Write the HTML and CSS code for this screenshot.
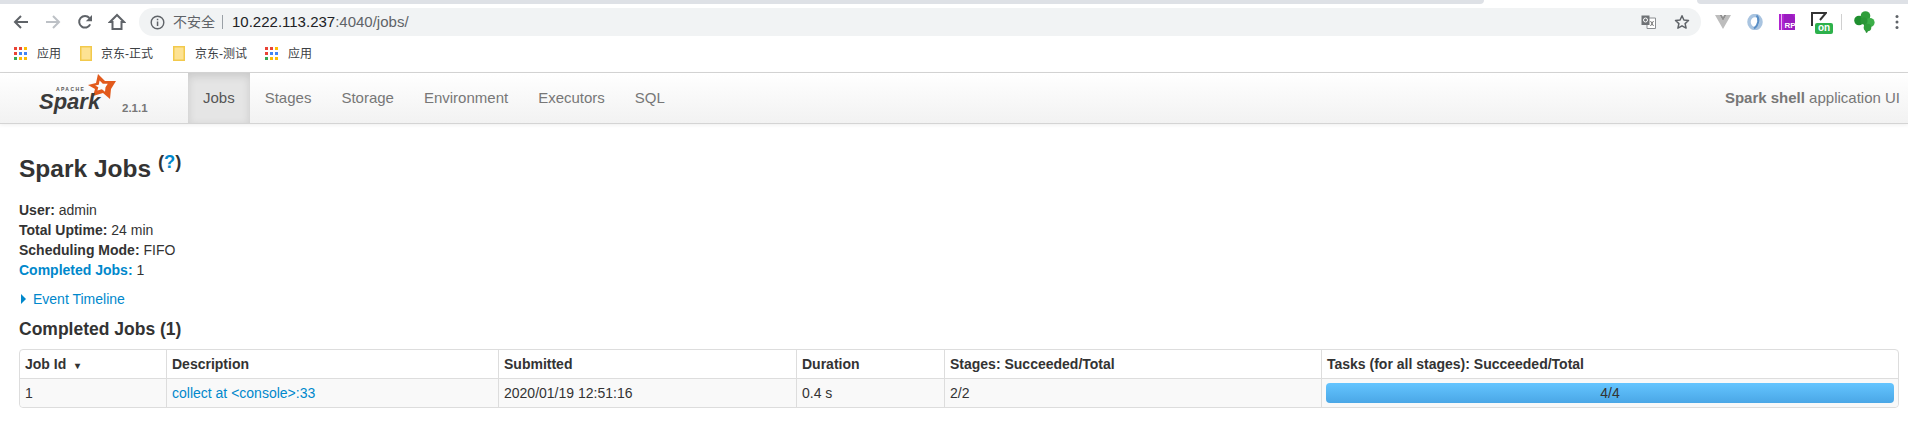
FILE: index.html
```html
<!DOCTYPE html>
<html lang="zh">
<head>
<meta charset="utf-8">
<title>Spark shell - Spark Jobs</title>
<link rel="stylesheet" href="styles.css">
</head>
<body>
<div class="tabstrip"><div class="strip-left"></div><div class="strip-right"></div></div>
<div class="toolbar">
  <svg class="ic ic-back" width="16" height="16" viewBox="0 0 16 16"><path d="M15 8H2.500M8 2 2 8l6 6" fill="none" stroke="#5f6368" stroke-width="2"/></svg>
  <svg class="ic ic-fwd" width="16" height="16" viewBox="0 0 16 16"><path d="M1 8h12.500M8 2l6 6-6 6" fill="none" stroke="#bdc1c6" stroke-width="2"/></svg>
  <svg class="ic ic-reload" width="16" height="16" viewBox="0 0 16 16"><path d="M13.200 10.400A5.800 5.800 0 1 1 12.400 4" fill="none" stroke="#5f6368" stroke-width="2"/><path d="M15 1v6.200H8.800z" fill="#5f6368"/></svg>
  <svg class="ic ic-home" width="18" height="18" viewBox="0 0 18 18"><path d="M9 2 2 9h2.500v7h9V9H16z" fill="none" stroke="#5f6368" stroke-width="2"/></svg>
  <div class="omnibox">
    <svg class="ic ic-info" width="15" height="15" viewBox="0 0 15 15"><circle cx="7.500" cy="7.500" r="6.300" fill="none" stroke="#5f6368" stroke-width="1.400"/><path d="M6.800 6.500h1.500v4.600H6.800zM6.800 3.800h1.500v1.500H6.800z" fill="#5f6368"/></svg>
    <span class="insecure">不安全</span>
    <span class="url-sep"></span>
    <span class="url"><span class="url-host">10.222.113.237</span>:4040/jobs/</span>
    <svg class="ic ic-trans" width="15" height="14" viewBox="0 0 15 14"><path d="M6 3h8.500v10.500H6z" fill="#fff" stroke="#8a8d91"/><path d="M0.500 0.500h8v9.500h-8z" fill="#6f7276"/><circle cx="4.500" cy="5" r="2" fill="none" stroke="#fff"/><path d="M9.500 6l3 5M12.500 6l-3 5" stroke="#777" fill="none"/></svg>
    <svg class="ic ic-star" width="16" height="16" viewBox="0 0 16 16"><path d="M8 1.800l1.900 4.200 4.600.5-3.400 3.100 1 4.500L8 11.800 3.900 14.100l1-4.500L1.500 6.500 6.100 6z" fill="none" stroke="#5f6368" stroke-width="1.500" stroke-linejoin="round"/></svg>
  </div>
  <svg class="ic ic-vue" width="16" height="14" viewBox="0 0 16 14"><path d="M0 0h4.500L8 6l3.500-6H16L8 14z" fill="#bdbdbd"/><path d="M4.500 0H7L8 2l1-2h2.500L8 6z" fill="#909090"/></svg>
  <svg class="ic ic-ring" width="16" height="16" viewBox="0 0 16 16"><ellipse cx="8" cy="8" rx="6" ry="6.500" fill="none" stroke="#a9c4e0" stroke-width="3.500"/><path d="M9.500 1.500C12.500 4 12 11 7 14.500" fill="none" stroke="#5a8fc6" stroke-width="2"/></svg>
  <svg class="ic ic-rp" width="16" height="16" viewBox="0 0 16 16"><rect width="16" height="16" fill="#b025d0"/><rect x="2" width="1" height="16" fill="#e9b6f2"/><path d="M5 0h8l3 4v12H5z" fill="#9a1cc0"/><text x="5.500" y="14" class="rp-text">RP</text></svg>
  <div class="ext-on">
    <svg class="ic on-mark" width="16" height="14" viewBox="0 0 16 14"><path d="M1 14V1h14L9 8" fill="none" stroke="#333" stroke-width="2"/></svg>
    <span class="on-badge">on</span>
  </div>
  <span class="tool-sep"></span>
  <svg class="ic ic-clover" width="21" height="22" viewBox="0 0 21 22"><path d="M10 11.500C11 13 11.500 18 13 21.500" fill="none" stroke="#2a8f35" stroke-width="2"/><circle cx="5" cy="9.500" r="4.800" fill="#1f8f2f"/><circle cx="11.500" cy="5" r="4.800" fill="#2f9e3a"/><circle cx="16" cy="11.500" r="4.600" fill="#3cae48"/><circle cx="13.500" cy="16.500" r="3.800" fill="#2f9e3a"/><circle cx="10" cy="10" r="3.500" fill="#2a9636"/></svg>
  <svg class="ic ic-dots" width="4" height="16" viewBox="0 0 4 16"><circle cx="2" cy="2.500" r="1.500" fill="#5f6368"/><circle cx="2" cy="8" r="1.500" fill="#5f6368"/><circle cx="2" cy="13.500" r="1.500" fill="#5f6368"/></svg>
</div>
<div class="bookmarks">
  <div class="bm bm-a">
    <svg class="ic" width="13" height="13" viewBox="0 0 13 13"><rect width="3" height="3" fill="#ea4335"/><rect x="5" width="3" height="3" fill="#ea4335"/><rect x="10" width="3" height="3" fill="#fbbc05"/><rect y="5" width="3" height="3" fill="#ea4335"/><rect x="5" y="5" width="3" height="3" fill="#4285f4"/><rect x="10" y="5" width="3" height="3" fill="#4285f4"/><rect y="10" width="3" height="3" fill="#34a853"/><rect x="5" y="10" width="3" height="3" fill="#fbbc05"/><rect x="10" y="10" width="3" height="3" fill="#fbbc05"/></svg>
    <span>应用</span>
  </div>
  <div class="bm bm-b">
    <svg class="ic" width="12" height="15" viewBox="0 0 12 15"><path d="M.75.750h10.500v13.500H.75z" fill="#fde293" stroke="#f2c94c" stroke-width="1.500"/></svg>
    <span>京东-正式</span>
  </div>
  <div class="bm bm-c">
    <svg class="ic" width="12" height="15" viewBox="0 0 12 15"><path d="M.75.750h10.500v13.500H.75z" fill="#fde293" stroke="#f2c94c" stroke-width="1.500"/></svg>
    <span>京东-测试</span>
  </div>
  <div class="bm bm-d">
    <svg class="ic" width="13" height="13" viewBox="0 0 13 13"><rect width="3" height="3" fill="#ea4335"/><rect x="5" width="3" height="3" fill="#ea4335"/><rect x="10" width="3" height="3" fill="#fbbc05"/><rect y="5" width="3" height="3" fill="#ea4335"/><rect x="5" y="5" width="3" height="3" fill="#4285f4"/><rect x="10" y="5" width="3" height="3" fill="#4285f4"/><rect y="10" width="3" height="3" fill="#34a853"/><rect x="5" y="10" width="3" height="3" fill="#fbbc05"/><rect x="10" y="10" width="3" height="3" fill="#fbbc05"/></svg>
    <span>应用</span>
  </div>
</div>
<nav class="navbar">
  <div class="brand">
    <svg class="logo" width="80" height="46" viewBox="0 0 80 46">
      <path fill-rule="evenodd" fill="#e25a1c" d="M60 2l7 7h11l-5 8-1 10-7-6-10 3 2-7-7-4 8-2zM61.600 8.600l-.85 4.050-3.600.9 3.150 1.800-.9 3.150 4.500-1.350L67 19.850l.5-4.500 2.250-3.600h-4.950z"/>
      <text x="18" y="19" class="logo-apache">APACHE</text>
      <text x="1" y="37" class="logo-spark">Spark</text>
    </svg>
    <span class="version">2.1.1</span>
  </div>
  <ul class="tabs">
    <li class="tab active">Jobs</li>
    <li class="tab">Stages</li>
    <li class="tab">Storage</li>
    <li class="tab">Environment</li>
    <li class="tab">Executors</li>
    <li class="tab">SQL</li>
  </ul>
  <p class="app-name"><strong>Spark shell</strong> application UI</p>
</nav>
<main class="content">
  <h3 class="title">Spark Jobs <sup class="help">(<a class="link">?</a>)</sup></h3>
  <ul class="summary">
    <li><strong>User:</strong> admin</li>
    <li><strong>Total Uptime:</strong> 24 min</li>
    <li><strong>Scheduling Mode:</strong> FIFO</li>
    <li><a class="link"><strong>Completed Jobs:</strong></a> 1</li>
  </ul>
  <div class="timeline"><span class="arrow"></span><a class="link">Event Timeline</a></div>
  <h4 class="subtitle">Completed Jobs (1)</h4>
  <table class="jobs">
    <colgroup><col class="c1"><col class="c2"><col class="c3"><col class="c4"><col class="c5"><col class="c6"></colgroup>
    <thead>
      <tr><th>Job Id <span class="sort">▾</span></th><th>Description</th><th>Submitted</th><th>Duration</th><th>Stages: Succeeded/Total</th><th>Tasks (for all stages): Succeeded/Total</th></tr>
    </thead>
    <tbody>
      <tr><td>1</td><td><a class="link">collect at &lt;console&gt;:33</a></td><td>2020/01/19 12:51:16</td><td>0.4 s</td><td>2/2</td><td><div class="progress">4/4</div></td></tr>
    </tbody>
  </table>
</main>
</body>
</html>
```
FILE: styles.css
```css
* { box-sizing: border-box; }
html, body { margin: 0; padding: 0; background: #fff; overflow: hidden; }
body { font-family: "Liberation Sans", Arial, "Noto Sans CJK SC", sans-serif; font-size: 14px; line-height: 20px; color: #333; }
.ic { display: block; flex: none; }

.tabstrip { display: flex; justify-content: space-between; height: 4px; }
.strip-left { width: 1484px; background: #dee1e6; border-bottom-right-radius: 5px; }
.strip-right { width: 211px; background: #dee1e6; border-bottom-left-radius: 5px; }

.toolbar { display: flex; align-items: center; height: 36px; padding-left: 13px; }
.ic-fwd { margin-left: 16px; }
.ic-reload { margin-left: 16px; }
.ic-home { margin-left: 15px; }
.omnibox { display: flex; align-items: center; flex: 1 0 auto; max-width: 1563px; height: 28px; margin-left: 13px; padding: 0 11px; background: #f1f3f4; border-radius: 14px; }
.insecure { margin-left: 8px; font-size: 14px; color: #5f6368; }
.url-sep { width: 1px; height: 14px; margin: 0 9px 0 7px; background: #9aa0a6; }
.url { flex: 1; font-size: 15px; color: #5f6368; }
.url-host { color: #202124; }
.ic-star { margin-left: 18px; }
.ic-vue { margin-left: 14px; }
.ic-ring { margin-left: 16px; }
.ic-rp { margin-left: 16px; }
.rp-text { font: bold 8px "Liberation Sans", sans-serif; fill: #fff; }
.ext-on { display: flex; flex-direction: column; width: 22px; margin-left: 16px; padding-top: 1px; }
.on-badge { align-self: flex-end; width: 18px; height: 11px; margin-top: -3px; background: #2db14b; border-radius: 2px; color: #fff; font-size: 10px; font-weight: bold; line-height: 10px; text-align: center; }
.tool-sep { width: 1px; height: 16px; margin-left: 8px; background: #d0d0d0; }
.ic-clover { margin-left: 12px; }
.ic-dots { margin: 0 9px 0 20px; }

.bookmarks { display: flex; align-items: center; height: 33px; padding-bottom: 5px; border-bottom: 1px solid #d6d6d6; font-size: 12px; color: #3c4043; }
.bm { display: flex; align-items: center; gap: 10px; }
.bm-a { margin-left: 14px; }
.bm-b { margin-left: 19px; gap: 9px; }
.bm-c { margin-left: 20px; }
.bm-d { margin-left: 18px; }

.navbar { display: flex; align-items: stretch; height: 51px; background: linear-gradient(#ffffff, #f2f2f2); border-bottom: 1px solid #d4d4d4; box-shadow: 0 1px 4px rgba(0,0,0,.065); }
.brand { display: flex; align-items: flex-end; width: 188px; padding-left: 38px; padding-bottom: 7px; }
.logo { margin-bottom: -2px; }
.logo-apache { font: bold 5px "Liberation Sans", sans-serif; letter-spacing: 1.4px; fill: #555; }
.logo-spark { font: italic bold 22px "Liberation Sans", sans-serif; fill: #3a3a3a; }
.version { margin-left: 4px; font-size: 11.5px; font-weight: bold; line-height: 16px; color: #777; }
.tabs { display: flex; margin: 0; padding: 0; list-style: none; }
.tab { padding: 0 15px; font-size: 15px; line-height: 50px; color: #777; }
.tab.active { background: #e5e5e5; color: #555; box-shadow: inset 0 3px 8px rgba(0,0,0,.125); }
.app-name { margin: 0 8px 0 auto; font-size: 15px; line-height: 50px; color: #777; }

.content { padding: 0 9px 0 19px; }
.title { margin: 25px 0 0; font-size: 24.5px; line-height: 40px; font-weight: bold; color: #333; }
.help { font-size: 18.4px; line-height: 0; }
.link { color: #0088cc; }
.summary { margin: 11px 0 0; padding: 0; list-style: none; }
.timeline { display: flex; align-items: center; margin-top: 9px; color: #0088cc; }
.arrow { width: 0; height: 0; margin: 0 7px 0 2px; border-left: 5px solid #0088cc; border-top: 5px solid transparent; border-bottom: 5px solid transparent; }
.subtitle { margin: 10px 0 0; font-size: 17.5px; line-height: 20px; font-weight: bold; color: #333; }
.jobs { width: 100%; margin-top: 10px; border-collapse: separate; border-spacing: 0; table-layout: fixed; border: 1px solid #ddd; border-radius: 4px; }
.c1 { width: 146px; }
.c2 { width: 332px; }
.c3 { width: 298px; }
.c4 { width: 148px; }
.c5 { width: 377px; }
.jobs th, .jobs td { padding: 4px 5px; border-left: 1px solid #ddd; text-align: left; vertical-align: top; font-size: 14px; line-height: 20px; }
.jobs th { padding-bottom: 2px; }
.jobs th:first-child, .jobs td:first-child { border-left: 0; }
.jobs td { border-top: 1px solid #ddd; background: #f9f9f9; }
.jobs tbody tr td:first-child { border-bottom-left-radius: 4px; }
.jobs tbody tr td:last-child { border-bottom-right-radius: 4px; }
.sort { margin-left: 5px; font-size: 10px; }
.progress { height: 20px; margin: 0 -1px; background: linear-gradient(#64c5ff, #4aa7e6); border-radius: 4px; text-align: center; font-size: 14px; line-height: 20px; color: #333; }
```
